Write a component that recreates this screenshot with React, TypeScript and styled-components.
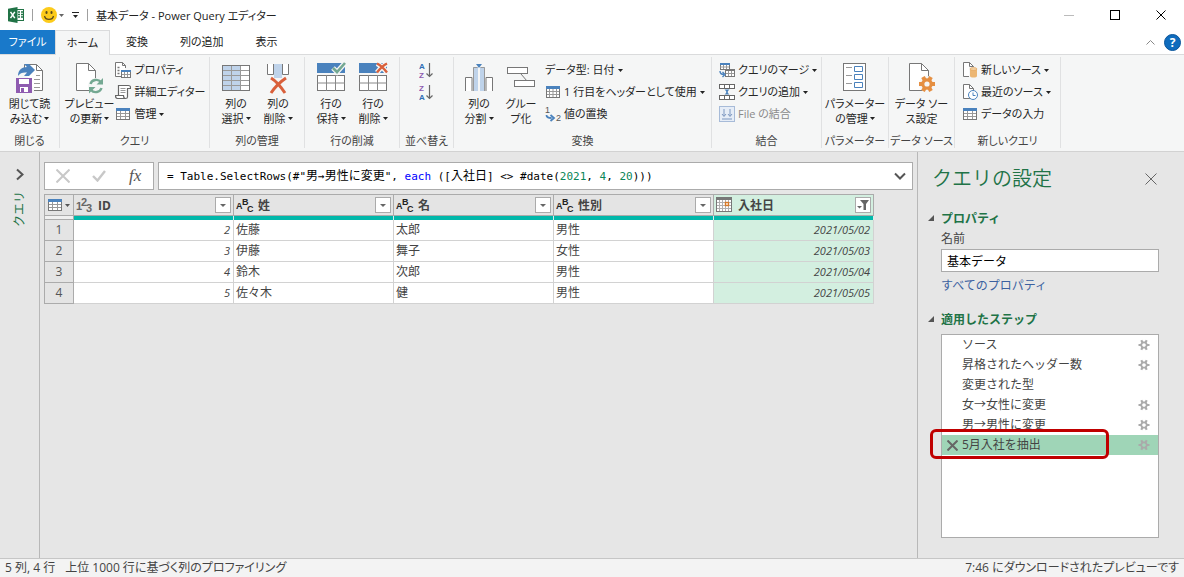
import React from "react";
import styled, { createGlobalStyle } from "styled-components";

const Global = createGlobalStyle`
  *, *::before, *::after { box-sizing: border-box; }
  body { margin: 0; background: #e6e6e6; }
  body, button, input {
    font-family: "Open Sans", "Noto Sans CJK JP", sans-serif;
    font-size: 12px;
    color: #262626;
  }
  button { margin: 0; padding: 0; border: 0; background: none; cursor: pointer; }
  svg { display: block; flex: none; }
`;

/* ---------- shell ---------- */

const Window = styled.div`
  display: flex;
  flex-direction: column;
  min-height: 100vh;
`;

const TitleBar = styled.header`
  display: flex;
  align-items: center;
  height: 30px;
  padding-left: 8px;
  background: #fff;
`;

const QuickAccess = styled.div`
  display: flex;
  align-items: center;
  gap: 8px;
`;

const Divider = styled.span`
  width: 1px;
  height: 12px;
  background: #a0a0a0;
`;

const IconButton = styled.button`
  display: flex;
  align-items: center;
  gap: 2px;
`;

const WindowTitle = styled.h1`
  margin: 0 auto 0 8px;
  font-size: 11px;
  font-weight: 400;
  color: #222;
  font-feature-settings: "palt";
`;

const WindowButton = styled.button`
  display: flex;
  align-items: center;
  justify-content: center;
  width: 46px;
  height: 30px;
`;

const TabRow = styled.nav`
  display: flex;
  height: 24px;
  background: #fff;
`;

const Tab = styled.button<{ $kind?: "file" | "active" }>`
  position: relative;
  height: ${(p) => (p.$kind === "active" ? 25 : 24)}px;
  min-width: ${(p) => (p.$kind ? 55 : 0)}px;
  padding: 0 ${(p) => (p.$kind ? 8 : 16)}px;
  font-size: 11px;
  line-height: 22px;
  font-feature-settings: "palt";
  color: ${(p) => (p.$kind === "file" ? "#fff" : "#222")};
  background: ${(p) =>
    p.$kind === "file" ? "#1979ca" : p.$kind === "active" ? "#f5f6f6" : "none"};
  border: ${(p) => (p.$kind === "active" ? "1px solid #dadbdc" : "0")};
  border-bottom: 0;
`;

const TabTools = styled.div`
  display: flex;
  align-items: center;
  gap: 9px;
  margin-left: auto;
  padding-right: 3px;
`;

/* ---------- ribbon ---------- */

const Ribbon = styled.div`
  display: flex;
  height: 98px;
  background: #f5f6f6;
  border-top: 1px solid #dadbdc;
  border-bottom: 1px solid #d2d2d2;
`;

const Group = styled.section<{ $width: number }>`
  display: flex;
  flex-direction: column;
  flex: none;
  width: ${(p) => p.$width}px;
  margin: 2px 0 3px;
  padding-top: 2px;
  border-right: 1px solid #e0e1e2;
`;

const Tools = styled.div<{ $start?: boolean }>`
  display: flex;
  flex: 1;
  justify-content: ${(p) => (p.$start ? "flex-start" : "center")};
  padding-left: ${(p) => (p.$start ? 7 : 0)}px;
`;

const GroupLabel = styled.h2`
  margin: 0;
  height: 15px;
  font-size: 11px;
  font-weight: 400;
  line-height: 15px;
  text-align: center;
  white-space: nowrap;
  color: #444;
  font-feature-settings: "palt";
`;

const BigButton = styled.button<{ $width?: number }>`
  display: flex;
  flex-direction: column;
  align-items: center;
  width: ${(p) => p.$width ?? 42}px;
  height: 70px;
  padding-top: 3px;
  gap: 2px;
  font-size: 11px;
  line-height: 15px;
  white-space: nowrap;
  font-feature-settings: "palt";
`;

const Line = styled.span`
  display: flex;
  align-items: center;
  justify-content: center;
  gap: 2px;
`;

const SmallList = styled.div`
  display: flex;
  flex-direction: column;
`;

const SmallButton = styled.button<{ $muted?: boolean }>`
  display: flex;
  align-items: center;
  height: 22px;
  gap: 3px;
  font-size: 11px;
  line-height: 22px;
  white-space: nowrap;
  color: ${(p) => (p.$muted ? "#8a8a8a" : "#262626")};
  font-feature-settings: "palt";
`;

const SortButton = styled.button`
  display: flex;
  align-items: center;
  height: 22px;
`;

/* ---------- work area ---------- */

const Body = styled.div`
  display: flex;
  flex: 1;
`;

const NavPane = styled.aside`
  display: flex;
  flex-direction: column;
  align-items: center;
  width: 40px;
  padding-top: 16px;
  gap: 10px;
  border-right: 1px solid #b8b8b8;
`;

const NavTitle = styled.h2`
  margin: 0;
  font-size: 12px;
  font-weight: 400;
  line-height: 16px;
  color: #217346;
  writing-mode: vertical-rl;
  transform: rotate(180deg);
`;

const NavTitleText = styled.span`
  text-orientation: sideways;
`;

const Main = styled.main`
  flex: 1;
  min-width: 0;
  padding: 10px 4px 10px 4px;
`;

const FormulaRow = styled.div`
  display: flex;
  gap: 4px;
  height: 28px;
`;

const FormulaActions = styled.div`
  display: flex;
  align-items: center;
  justify-content: space-around;
  width: 110px;
  background: #fff;
  border: 1px solid #ababab;
`;

const FormulaField = styled.div`
  display: flex;
  align-items: center;
  flex: 1;
  padding: 0 6px 0 8px;
  background: #fff;
  border: 1px solid #ababab;
`;

const FormulaText = styled.div`
  flex: 1;
  font-family: "DejaVu Sans Mono", "Noto Sans CJK JP", monospace;
  font-size: 11px;
  line-height: 20px;
  white-space: pre;
  color: #000;
  outline: none;
`;

const Kanji = styled.span`
  font-size: 12px;
`;

const Keyword = styled.span`
  color: #0000ff;
`;

const NumberToken = styled.span`
  color: #098658;
`;

/* ---------- grid ---------- */

const Grid = styled.table`
  width: 830px;
  margin-top: 4px;
  table-layout: fixed;
  border-collapse: separate;
  border-spacing: 0;
  border-top: 1px solid #ababab;
  border-left: 1px solid #ababab;
`;

const IndexCol = styled.col`
  width: 29px;
`;

const HeadCell = styled.th<{ $selected?: boolean }>`
  height: 21px;
  padding: 0 2px;
  background: ${(p) => (p.$selected ? "#d3efe0" : "#e4e4e4")};
  border-right: 1px solid #ababab;
  border-bottom: 1px solid #ababab;
`;

const HeadContent = styled.div`
  display: flex;
  align-items: center;
  height: 20px;
  gap: 4px;
  font-weight: 700;
  color: #444;
`;

const FilterButton = styled.button`
  display: flex;
  align-items: center;
  justify-content: center;
  width: 16px;
  height: 16px;
  margin-left: auto;
  background: #fff;
  border: 1px solid #ababab;
`;

const QualityCell = styled.td<{ $blank?: boolean }>`
  height: 4px;
  padding: 0;
  background: ${(p) => (p.$blank ? "#f0f0f0" : "#01b8aa")};
  border-right: 1px solid ${(p) => (p.$blank ? "#ababab" : "#d9eeec")};
  border-bottom: ${(p) => (p.$blank ? "1px solid #ababab" : "0")};
`;

const IndexCell = styled.th`
  height: 21px;
  padding: 0;
  font-size: 12px;
  font-weight: 400;
  line-height: 20px;
  color: #555;
  background: #e4e4e4;
  border-right: 1px solid #ababab;
  border-bottom: 1px solid #ababab;
`;

const Cell = styled.td<{ $selected?: boolean; $numeric?: boolean }>`
  height: 21px;
  padding: 0 3px 0 2px;
  font-size: ${(p) => (p.$numeric ? 11 : 12)}px;
  font-style: ${(p) => (p.$numeric ? "italic" : "normal")};
  line-height: 20px;
  text-align: ${(p) => (p.$numeric ? "right" : "left")};
  color: #444;
  background: ${(p) => (p.$selected ? "#d3efe0" : "#fff")};
  border-right: 1px solid #d2d2d2;
  border-bottom: 1px solid #d2d2d2;
`;

/* ---------- settings ---------- */

const Settings = styled.aside`
  display: flex;
  flex-direction: column;
  width: 267px;
  padding: 13px 25px 20px 10px;
  border-left: 1px solid #b8b8b8;
`;

const SettingsHead = styled.div`
  display: flex;
  align-items: center;
  justify-content: space-between;
  height: 28px;
  margin-bottom: 15px;
  padding: 0 2px 0 4px;
`;

const SettingsTitle = styled.h2`
  margin: 0;
  font-size: 20px;
  font-weight: 350;
  line-height: 28px;
  color: #217346;
`;

const SectionTitle = styled.button`
  display: flex;
  align-items: center;
  height: 20px;
  gap: 7px;
  font-weight: 700;
  color: #217346;
`;

const FieldLabel = styled.label`
  padding-left: 13px;
  line-height: 21px;
  color: #444;
`;

const NameInput = styled.input`
  height: 23px;
  margin-left: 13px;
  padding: 0 5px;
  background: #fff;
  border: 1px solid #ababab;
  color: #000;
`;

const AllLink = styled.a`
  margin-bottom: 9px;
  padding-left: 13px;
  line-height: 28px;
  color: #3b61a0;
  text-decoration: none;
`;

const StepList = styled.ol`
  flex: 1;
  margin: 5px 0 0 13px;
  padding: 0;
  list-style: none;
  background: #fff;
  border: 1px solid #ababab;
`;

const Step = styled.li<{ $selected?: boolean }>`
  position: relative;
  display: flex;
  align-items: center;
  height: 20px;
  padding: 0 8px 0 5px;
  color: #444;
  background: ${(p) => (p.$selected ? "#9fd5b7" : "none")};
`;

const StepMark = styled.span`
  display: flex;
  width: 15px;
`;

const StepName = styled.button`
  margin-right: auto;
  line-height: 20px;
  color: #444;
`;

const Callout = styled.span`
  position: absolute;
  top: -6px;
  left: -12px;
  right: 49px;
  height: 30px;
  border: 3px solid #c00000;
  border-radius: 6px;
  pointer-events: none;
`;

const StatusBar = styled.footer`
  display: flex;
  align-items: center;
  height: 19px;
  padding: 0 5px;
  gap: 10px;
  font-size: 12px;
  line-height: 18px;
  color: #444;
  background: #f3f3f3;
  border-top: 1px solid #c6c6c6;
  font-feature-settings: "palt";
`;

const StatusRight = styled.span`
  margin-left: auto;
`;

/* ---------- drawings ---------- */

const Arrow = ({ color = "#222", size = 5 }: { color?: string; size?: number }) => (
  <svg width={size} height="3" viewBox={`0 0 ${size} 3`} aria-hidden="true">
    <path d={`M0 0h${size}L${size / 2} 3z`} fill={color} />
  </svg>
);

const Svg = ({
  w,
  h = w,
  children,
}: {
  w: number;
  h?: number;
  children: React.ReactNode;
}) => (
  <svg width={w} height={h} viewBox={`0 0 ${w} ${h}`} fill="none" aria-hidden="true">
    {children}
  </svg>
);

const ExcelLogo = () => (
  <Svg w={16}>
    <rect x="8.500" y="2.500" width="7" height="11" fill="#fff" stroke="#217346" />
    <path d="M10 5h2M13 5h2M10 7.500h2M13 7.500h2M10 10h2M13 10h2" stroke="#217346" strokeWidth="1.400" />
    <path d="M0 1.800 9.500 0v16L0 14.200z" fill="#217346" />
    <path d="m2.500 4.800 4.300 6.400M6.800 4.800l-4.300 6.400" stroke="#fff" strokeWidth="1.500" />
  </Svg>
);

const Smiley = () => (
  <Svg w={16}>
    <circle cx="8" cy="8" r="8" fill="#fccb1b" />
    <rect x="4.500" y="4" width="2" height="3" rx="1" fill="#5b4a1c" />
    <rect x="9.500" y="4" width="2" height="3" rx="1" fill="#5b4a1c" />
    <path d="M3.500 9c1 4.500 8 4.500 9 0" stroke="#5b4a1c" strokeWidth="1.200" />
  </Svg>
);

const CustomizeMark = () => (
  <Svg w={7} h={6}>
    <path d="M0 .5h7" stroke="#222" />
    <path d="M1 3h5L3.500 6z" fill="#222" />
  </Svg>
);

const CloseLoadIcon = () => (
  <Svg w={30} h={32}>
    <path d="M9.500 8V2.500h12l6 6v20H19" fill="#fff" stroke="#777" />
    <path d="M21.500 2.500v6h6" stroke="#777" />
    <path d="M21 13.500h4M19 17.500h6M19 21.500h6M19 25.500h6" stroke="#999" />
    <path d="M3 14c0-6 4-9 9-9L9 2h5l6 6-6 6H9l3-3.500c-4-.5-7 .5-9 3.500z" fill="#4a82bd" />
    <path d="M1 16h16v15H1z" fill="#8e5bb0" />
    <path d="M4 17h10v5H4zM5 25h8v5H5z" fill="#fff" />
    <path d="M6 26h3v4H6z" fill="#8e5bb0" />
  </Svg>
);

const PageOutline = () => (
  <>
    <path d="M1.500 1.500h12l7 7v20h-19z" fill="#fff" stroke="#777" />
    <path d="M13.500 1.500v7h7" stroke="#777" />
  </>
);

const RefreshIcon = () => (
  <Svg w={28} h={32}>
    <PageOutline />
    <circle cx="21" cy="24" r="8" fill="#f5f6f6" />
    <path d="M15.500 22a6 5.500 0 0 1 10.500-2M26.500 26a6 5.500 0 0 1-10.500 2" stroke="#74a892" strokeWidth="2.400" />
    <path d="M28 16v6.500h-6.500zM14 31.500V25h6.500z" fill="#74a892" />
  </Svg>
);

const PropertiesIcon = () => (
  <Svg w={16}>
    <path d="M6 14.500H.5v-14h7l3 3V6" fill="#fff" stroke="#777" />
    <path d="M7.500.5v3h3" stroke="#777" />
    <path d="M2.500 5.500h2M2.500 8.500h2M2.500 11.500h2" stroke="#777" strokeWidth="1.500" />
    <rect x="6.500" y="8.500" width="9" height="7" fill="#fff" stroke="#777" />
    <path d="M6 8h10v2H6z" fill="#4a82bd" />
    <path d="M7 12.500h8M9.500 10v5M12.500 10v5" stroke="#999" />
  </Svg>
);

const ScriptIcon = () => (
  <Svg w={16}>
    <path d="M3.500 11V1.500h10a2 2 0 0 1 2 2v1h-3V13c0 1-1 1.500-2 1.500h-8c-1.500 0-2-1-2-3h8c0 2 .5 3 2 3" fill="#fff" stroke="#666" strokeWidth="1.200" />
    <path d="M5.500 4.500h5M5.500 6.500h5M5.500 8.500h5" stroke="#999" />
  </Svg>
);

const TableIcon = ({ cols = 3 }: { cols?: number }) => (
  <Svg w={16}>
    <rect x="1.500" y="2.500" width="13" height="11" fill="#fff" stroke="#777" />
    <path d="M1 2h14v3H1z" fill="#4a82bd" />
    <path d="M2 7.500h12M2 10.500h12" stroke="#999" />
    <path d={cols === 3 ? "M5.500 5v8M10.500 5v8" : "M4.500 5v8M8 5v8M11.500 5v8"} stroke="#999" />
  </Svg>
);

const ChooseColumnsIcon = () => (
  <Svg w={30} h={32}>
    <rect x="1.500" y="3.500" width="27" height="25" fill="#fff" />
    <path d="M2 4h17v24H2z" fill="#bfd3ea" />
    <path d="M10.500 3v26M19.500 3v26M1 8.500h28M1 13.500h28M1 18.500h28M1 23.500h28" stroke="#999" />
    <rect x="1.500" y="3.500" width="27" height="25" stroke="#777" />
  </Svg>
);

const RemoveColumnsIcon = () => (
  <Svg w={24} h={32}>
    <path d="M1.500 2v10.500h6V2M16.500 2v10.500h6V2" fill="#fff" stroke="#777" />
    <path d="M8 2h8v14H8z" fill="#bfd3ea" />
    <path d="M5 16c5 3 10 9 14 15M20 16c-6 4-11 9-15 15" stroke="#d9603b" strokeWidth="3" />
  </Svg>
);

const RowsIcon = ({ remove }: { remove?: boolean }) => (
  <Svg w={30} h={32}>
    <path d="M1 1h28v10H1z" fill="#4a82bd" />
    <rect x="1.500" y="13.500" width="27" height="15" fill="#fff" stroke="#777" />
    <path d="M1 21h28M10.500 13v16M19.500 13v16" stroke="#888" />
    {remove ? (
      <path d="M19 1.500c4 2 7 5 10 9M29 1.500c-4 2-7 5-10 9" stroke="#f5f6f6" strokeWidth="5" />
    ) : (
      <path d="m17 6 4 4 8-9" stroke="#f5f6f6" strokeWidth="5" />
    )}
    {remove ? (
      <path d="M19 1.500c4 2 7 5 10 9M29 1.500c-4 2-7 5-10 9" stroke="#d9603b" strokeWidth="2.400" />
    ) : (
      <path d="m17 6 4 4 8-9" stroke="#74a892" strokeWidth="2.600" />
    )}
  </Svg>
);

const SortIcon = ({ desc }: { desc?: boolean }) => (
  <svg width="15" height="20" viewBox="0 0 15 20" aria-hidden="true">
    <g fontFamily="Liberation Sans, sans-serif" fontSize="8" fontWeight="700">
      <text x="0" y="9" fill={desc ? "#8e5bb0" : "#2f6fb5"}>
        {desc ? "Z" : "A"}
      </text>
      <text x="0" y="18" fill={desc ? "#2f6fb5" : "#8e5bb0"}>
        {desc ? "A" : "Z"}
      </text>
    </g>
    <path d="M10.500 3v13.500M7.500 13.500l3 3 3-3" fill="none" stroke="#666" strokeWidth="1.200" />
  </svg>
);

const SplitColumnIcon = () => (
  <Svg w={30} h={32}>
    <path d="M1.500 29V15.500H8V29zM22 29V15.500h6.500V29z" fill="#fff" />
    <path d="M1.500 29V15.500H8V29M28.500 29V15.500H22V29" stroke="#777" />
    <path d="M9 5h5v24H9zM16 5h5v24h-5z" fill="#bfd3ea" />
    <path d="M9.500 29V5.500h4M20.500 29V5.500h-4" stroke="#999" />
    <path d="M12 2h6l-3 4z" fill="#4a82bd" />
  </Svg>
);

const GroupByIcon = () => (
  <Svg w={30} h={32}>
    <path d="m15 12 6 7" stroke="#777" />
    <rect x="1.500" y="5.500" width="20" height="6" fill="#fff" stroke="#777" />
    <rect x="8.500" y="18.500" width="20" height="6" fill="#fff" stroke="#777" />
  </Svg>
);

const ReplaceIcon = () => (
  <svg width="16" height="18" viewBox="0 0 16 18" aria-hidden="true">
    <g fontFamily="Liberation Sans, sans-serif" fontSize="9" fill="#555">
      <text x="0" y="8">1</text>
      <text x="11" y="16">2</text>
    </g>
    <path d="M1.500 10c0 2.500 1.500 3 5 3M5.500 10l3.500 3-3.500 3" fill="none" stroke="#4a82bd" strokeWidth="1.800" />
  </svg>
);

const MergeIcon = () => (
  <Svg w={16}>
    <rect x="1.500" y="1.500" width="9" height="6" fill="#fff" stroke="#777" />
    <path d="M1 1h10v2H1z" fill="#4a82bd" />
    <path d="M4.500 3v4M7.500 3v4M1 5h9" stroke="#999" />
    <rect x="6.500" y="7.500" width="9" height="7" fill="#fff" stroke="#777" />
    <path d="M6 7h10v2H6z" fill="#777" />
    <path d="M9.500 9v5M12.500 9v5M7 11.500h8" stroke="#999" />
    <path d="M1 9c0 2.500 1 3.500 4 3.500M3.500 10 6 12.500 3.500 15" stroke="#4a82bd" strokeWidth="1.400" />
  </Svg>
);

const AppendIcon = () => (
  <Svg w={16}>
    <rect x=".5" y=".5" width="15" height="4" fill="#fff" stroke="#666" />
    <path d="M5.500 1v3M10.500 1v3" stroke="#666" />
    <rect x=".5" y="11.500" width="15" height="4" fill="#fff" stroke="#666" />
    <path d="M5.500 12v3M10.500 12v3" stroke="#666" />
    <path d="M8 6v4" stroke="#4a82bd" strokeWidth="1.400" />
    <path d="M5.500 5.500h5L8 8zM5.500 10.500h5L8 8z" fill="#4a82bd" />
  </Svg>
);

const CombineIcon = () => (
  <Svg w={16}>
    <rect x=".5" y=".5" width="15" height="15" fill="#e6edf7" stroke="#a7bbd8" />
    <path d="M5 3v7M11 3v7M3 8l2 2.500L7 8M9 8l2 2.500L13 8M3 13h10" stroke="#7d97c0" />
  </Svg>
);

const ParametersIcon = () => (
  <Svg w={24} h={32}>
    <rect x=".5" y="1.500" width="22" height="27" fill="#fff" stroke="#777" />
    <path d="M3 5.500h6M3 13.500h6M3 21.500h6" stroke="#999" />
    <path d="M11.500 4.500h8v5h-8zM11.500 12.500h8v5h-8zM11.500 20.500h8v5h-8z" stroke="#4a82bd" />
  </Svg>
);

const gearTeeth = (r: number, angles: number[]) =>
  angles
    .map((a) => {
      const x = Math.cos((a * Math.PI) / 180) * r;
      const y = Math.sin((a * Math.PI) / 180) * r;
      return `M${-x} ${-y}L${x} ${y}`;
    })
    .join("");

const DataSourceIcon = () => (
  <Svg w={28} h={32}>
    <PageOutline />
    <circle cx="19" cy="22" r="8" fill="#f5f6f6" />
    <g transform="translate(19 22)">
      <path d={gearTeeth(8, [0, 60, 120])} stroke="#e58f42" strokeWidth="4" />
      <circle r="5.800" fill="#e58f42" />
      <circle r="2.600" fill="#f5f6f6" />
    </g>
  </Svg>
);

const SmallPage = () => (
  <>
    <path d="M1.500.5h6l4 4v10h-10z" fill="#fff" stroke="#777" />
    <path d="M7.500.5v4h4" stroke="#777" />
  </>
);

const NewSourceIcon = () => (
  <Svg w={16}>
    <SmallPage />
    <path d="M7 5h9v11H7z" fill="#f5f6f6" />
    <path d="M8 7v7c0 2 7 2 7 0V7z" fill="#ecb673" />
    <ellipse cx="11.500" cy="7" rx="3.500" ry="1.500" fill="#f3cf9f" stroke="#e0a052" strokeWidth=".6" />
  </Svg>
);

const RecentIcon = () => (
  <Svg w={16}>
    <SmallPage />
    <circle cx="11" cy="11" r="4.500" fill="#fff" stroke="#4a82bd" />
    <path d="M11 8.500V11.500h2.500" stroke="#4a82bd" />
  </Svg>
);

const TypeIcon = ({ numeric }: { numeric?: boolean }) => (
  <svg width="18" height="20" viewBox="0 0 18 20" aria-hidden="true">
    {numeric ? (
      <g fontFamily="Liberation Sans, sans-serif" fontSize="11" fontWeight="700" fill="#666">
        <text x="0" y="15">1</text>
        <text x="5" y="11">2</text>
        <text x="10" y="17">3</text>
      </g>
    ) : (
      <g fontFamily="Liberation Sans, sans-serif" fontSize="9" fill="#222">
        <text x="0" y="14">A</text>
        <text x="6" y="10">B</text>
        <text x="11" y="17">C</text>
      </g>
    )}
  </svg>
);

const CalendarIcon = () => (
  <Svg w={18} h={16}>
    <rect x=".5" y=".5" width="15" height="14" fill="#fff" stroke="#777" />
    <path d="M0 0h16v3H0z" fill="#777" />
    <path d="M3.500 3v11M6.500 3v11M9.500 3v11M12.500 3v11M1 5.500h14M1 8.500h14M1 11.500h14" stroke="#b0b0b0" />
    <rect x="9.500" y="5.500" width="3" height="3" fill="#fff" stroke="#d77a28" strokeWidth="1.400" />
  </Svg>
);

const FunnelIcon = () => (
  <Svg w={12} h={12}>
    <path d="M3 1h9L9 5v6H6.500V5z" fill="#666" />
    <path d="M0 7h5L2.500 9.500z" fill="#666" />
  </Svg>
);

const StepGear = ({ hole }: { hole: string }) => (
  <Svg w={12}>
    <g transform="translate(6 6)" stroke="#aaa">
      <path d={gearTeeth(5.500, [0, 60, 120])} strokeWidth="2.200" />
      <circle r="2.700" fill={hole} strokeWidth="1.800" />
    </g>
  </Svg>
);

const Cross = ({ size, color, weight = 1 }: { size: number; color: string; weight?: number }) => (
  <Svg w={size}>
    <path d={`M.5.5 ${size - 0.5} ${size - 0.5}M${size - 0.5}.5.5 ${size - 0.5}`} stroke={color} strokeWidth={weight} />
  </Svg>
);

const Collapse = () => (
  <Svg w={6}>
    <path d="M6 0v6H0z" fill="#555" />
  </Svg>
);

/* ---------- parts ---------- */

const Big = ({
  icon,
  lines,
  menu,
  width,
}: {
  icon: React.ReactNode;
  lines: [string, string];
  menu?: boolean;
  width?: number;
}) => (
  <BigButton $width={width}>
    {icon}
    <span>
      <Line>{lines[0]}</Line>
      <Line>
        {lines[1]}
        {menu && <Arrow />}
      </Line>
    </span>
  </BigButton>
);

const Small = ({
  icon,
  label,
  menu,
  muted,
}: {
  icon?: React.ReactNode;
  label: string;
  menu?: boolean;
  muted?: boolean;
}) => (
  <SmallButton $muted={muted}>
    {icon}
    {label}
    {menu && <Arrow />}
  </SmallButton>
);

const columns = ["ID", "姓", "名", "性別", "入社日"];

const rows = [
  ["2", "佐藤", "太郎", "男性", "2021/05/02"],
  ["3", "伊藤", "舞子", "女性", "2021/05/03"],
  ["4", "鈴木", "次郎", "男性", "2021/05/04"],
  ["5", "佐々木", "健", "男性", "2021/05/05"],
];

const steps = [
  { name: "ソース", gear: true },
  { name: "昇格されたヘッダー数", gear: true },
  { name: "変更された型", gear: false },
  { name: "女→女性に変更", gear: true },
  { name: "男→男性に変更", gear: true },
  { name: "5月入社を抽出", gear: true, selected: true },
];

export default function App() {
  return (
    <Window>
      <Global />
      <TitleBar>
        <QuickAccess>
          <ExcelLogo />
          <Divider />
          <IconButton aria-label="フィードバック">
            <Smiley />
            <Arrow color="#666" />
          </IconButton>
          <IconButton aria-label="カスタマイズ">
            <CustomizeMark />
          </IconButton>
          <Divider />
        </QuickAccess>
        <WindowTitle>基本データ - Power Query エディター</WindowTitle>
        <WindowButton aria-label="最小化">
          <Svg w={10}>
            <path d="M0 5.500h10" stroke="#bbb" />
          </Svg>
        </WindowButton>
        <WindowButton aria-label="最大化">
          <Svg w={10}>
            <rect x=".5" y=".5" width="9" height="9" stroke="#000" />
          </Svg>
        </WindowButton>
        <WindowButton aria-label="閉じる">
          <Cross size={10} color="#000" />
        </WindowButton>
      </TitleBar>
      <TabRow>
        <Tab $kind="file">ファイル</Tab>
        <Tab $kind="active">ホーム</Tab>
        <Tab>変換</Tab>
        <Tab>列の追加</Tab>
        <Tab>表示</Tab>
        <TabTools>
          <IconButton aria-label="リボンを折りたたむ">
            <Svg w={9} h={5}>
              <path d="m.5 4.500 4-4 4 4" stroke="#888" />
            </Svg>
          </IconButton>
          <IconButton aria-label="ヘルプ">
            <svg width="17" height="17" viewBox="0 0 17 17" aria-hidden="true">
              <circle cx="8.500" cy="8.500" r="8" fill="#0f6cbd" stroke="#0b559b" />
              <text x="8.500" y="13" fontSize="12" fontWeight="700" fill="#fff" textAnchor="middle">?</text>
            </svg>
          </IconButton>
        </TabTools>
      </TabRow>

      <Ribbon>
        <Group $width={60}>
          <Tools>
            <Big icon={<CloseLoadIcon />} lines={["閉じて読", "み込む"]} menu width={56} />
          </Tools>
          <GroupLabel>閉じる</GroupLabel>
        </Group>
        <Group $width={150}>
          <Tools>
            <Big icon={<RefreshIcon />} lines={["プレビュー", "の更新"]} menu width={52} />
            <SmallList>
              <Small icon={<PropertiesIcon />} label="プロパティ" />
              <Small icon={<ScriptIcon />} label="詳細エディター" />
              <Small icon={<TableIcon />} label="管理" menu />
            </SmallList>
          </Tools>
          <GroupLabel>クエリ</GroupLabel>
        </Group>
        <Group $width={95}>
          <Tools>
            <Big icon={<ChooseColumnsIcon />} lines={["列の", "選択"]} menu />
            <Big icon={<RemoveColumnsIcon />} lines={["列の", "削除"]} menu />
          </Tools>
          <GroupLabel>列の管理</GroupLabel>
        </Group>
        <Group $width={95}>
          <Tools>
            <Big icon={<RowsIcon />} lines={["行の", "保持"]} menu />
            <Big icon={<RowsIcon remove />} lines={["行の", "削除"]} menu />
          </Tools>
          <GroupLabel>行の削減</GroupLabel>
        </Group>
        <Group $width={54}>
          <Tools>
            <SmallList>
              <SortButton aria-label="昇順で並べ替え"><SortIcon /></SortButton>
              <SortButton aria-label="降順で並べ替え"><SortIcon desc /></SortButton>
            </SmallList>
          </Tools>
          <GroupLabel>並べ替え</GroupLabel>
        </Group>
        <Group $width={258}>
          <Tools $start>
            <Big icon={<SplitColumnIcon />} lines={["列の", "分割"]} menu width={36} />
            <Big icon={<GroupByIcon />} lines={["グルー", "プ化"]} width={48} />
            <SmallList>
              <Small label="データ型: 日付" menu />
              <Small icon={<TableIcon cols={4} />} label="1 行目をヘッダーとして使用" menu />
              <Small icon={<ReplaceIcon />} label="値の置換" />
            </SmallList>
          </Tools>
          <GroupLabel>変換</GroupLabel>
        </Group>
        <Group $width={110}>
          <Tools $start>
            <SmallList>
              <Small icon={<MergeIcon />} label="クエリのマージ" menu />
              <Small icon={<AppendIcon />} label="クエリの追加" menu />
              <Small icon={<CombineIcon />} label="File の結合" muted />
            </SmallList>
          </Tools>
          <GroupLabel>結合</GroupLabel>
        </Group>
        <Group $width={67}>
          <Tools>
            <Big icon={<ParametersIcon />} lines={["パラメーター", "の管理"]} menu width={62} />
          </Tools>
          <GroupLabel>パラメーター</GroupLabel>
        </Group>
        <Group $width={66}>
          <Tools>
            <Big icon={<DataSourceIcon />} lines={["データ ソー", "ス設定"]} width={60} />
          </Tools>
          <GroupLabel>データ ソース</GroupLabel>
        </Group>
        <Group $width={106}>
          <Tools $start>
            <SmallList>
              <Small icon={<NewSourceIcon />} label="新しいソース" menu />
              <Small icon={<RecentIcon />} label="最近のソース" menu />
              <Small icon={<TableIcon />} label="データの入力" />
            </SmallList>
          </Tools>
          <GroupLabel>新しいクエリ</GroupLabel>
        </Group>
      </Ribbon>

      <Body>
        <NavPane>
          <IconButton aria-label="クエリを展開">
            <Svg w={8} h={13}>
              <path d="m1 1.500 5.500 5L1 11.500" stroke="#555" strokeWidth="2" />
            </Svg>
          </IconButton>
          <NavTitle>
            <NavTitleText>クエリ</NavTitleText>
          </NavTitle>
        </NavPane>

        <Main>
          <FormulaRow>
            <FormulaActions>
              <IconButton aria-label="取り消す">
                <Cross size={14} color="#c8c8c8" weight={2} />
              </IconButton>
              <IconButton aria-label="確定">
                <Svg w={14} h={12}>
                  <path d="m1 6 4.500 4.500L13 1" stroke="#c8c8c8" strokeWidth="2.400" />
                </Svg>
              </IconButton>
              <IconButton aria-label="ステップの追加">
                <svg width="14" height="20" viewBox="0 0 14 20" aria-hidden="true">
                  <text x="1" y="15" fontFamily="Liberation Serif, serif" fontStyle="italic" fontSize="17" fill="#555">fx</text>
                </svg>
              </IconButton>
            </FormulaActions>
            <FormulaField>
              <FormulaText role="textbox" aria-label="数式" contentEditable suppressContentEditableWarning spellCheck={false}>
                {'= Table.SelectRows(#"'}
                <Kanji>男</Kanji>→<Kanji>男性に変更</Kanji>
                {'", '}
                <Keyword>each</Keyword>
                {" (["}
                <Kanji>入社日</Kanji>
                {"] <> #date("}
                <NumberToken>2021</NumberToken>
                {", "}
                <NumberToken>4</NumberToken>
                {", "}
                <NumberToken>20</NumberToken>
                {")))"}
              </FormulaText>
              <IconButton aria-label="数式バーを展開">
                <Svg w={12} h={8}>
                  <path d="m1 1.500 5 5 5-5" stroke="#555" strokeWidth="2" />
                </Svg>
              </IconButton>
            </FormulaField>
          </FormulaRow>

          <Grid>
            <colgroup>
              <IndexCol />
              {columns.map((c) => (
                <col key={c} />
              ))}
            </colgroup>
            <thead>
              <tr>
                <HeadCell>
                  <IconButton aria-label="テーブルメニュー">
                    <TableIcon />
                    <Arrow color="#555" />
                  </IconButton>
                </HeadCell>
                {columns.map((c, i) => (
                  <HeadCell key={c} scope="col" $selected={i === 4}>
                    <HeadContent>
                      {i === 4 ? <CalendarIcon /> : <TypeIcon numeric={i === 0} />}
                      {c}
                      <FilterButton aria-label={`${c} のフィルター`}>
                        {i === 4 ? <FunnelIcon /> : <Arrow color="#666" size={6} />}
                      </FilterButton>
                    </HeadContent>
                  </HeadCell>
                ))}
              </tr>
              <tr aria-hidden="true">
                <QualityCell $blank />
                {columns.map((c) => (
                  <QualityCell key={c} />
                ))}
              </tr>
            </thead>
            <tbody>
              {rows.map((r, n) => (
                <tr key={r[0]}>
                  <IndexCell scope="row">{n + 1}</IndexCell>
                  {r.map((v, i) => (
                    <Cell key={i} $numeric={i === 0 || i === 4} $selected={i === 4}>
                      {v}
                    </Cell>
                  ))}
                </tr>
              ))}
            </tbody>
          </Grid>
        </Main>

        <Settings>
          <SettingsHead>
            <SettingsTitle>クエリの設定</SettingsTitle>
            <IconButton aria-label="設定を閉じる">
              <Cross size={12} color="#666" />
            </IconButton>
          </SettingsHead>
          <SectionTitle>
            <Collapse />
            プロパティ
          </SectionTitle>
          <FieldLabel htmlFor="query-name">名前</FieldLabel>
          <NameInput id="query-name" defaultValue="基本データ" />
          <AllLink href="#properties">すべてのプロパティ</AllLink>
          <SectionTitle>
            <Collapse />
            適用したステップ
          </SectionTitle>
          <StepList>
            {steps.map((s) => (
              <Step key={s.name} $selected={s.selected}>
                <StepMark>{s.selected && <Cross size={11} color="#666" weight={2} />}</StepMark>
                <StepName>{s.name}</StepName>
                {s.gear && (
                  <IconButton aria-label={`${s.name} の設定`}>
                    <StepGear hole={s.selected ? "#9fd5b7" : "#fff"} />
                  </IconButton>
                )}
                {s.selected && <Callout />}
              </Step>
            ))}
          </StepList>
        </Settings>
      </Body>

      <StatusBar>
        <span>5 列, 4 行</span>
        <span>上位 1000 行に基づく列のプロファイリング</span>
        <StatusRight>7:46 にダウンロードされたプレビューです</StatusRight>
      </StatusBar>
    </Window>
  );
}
